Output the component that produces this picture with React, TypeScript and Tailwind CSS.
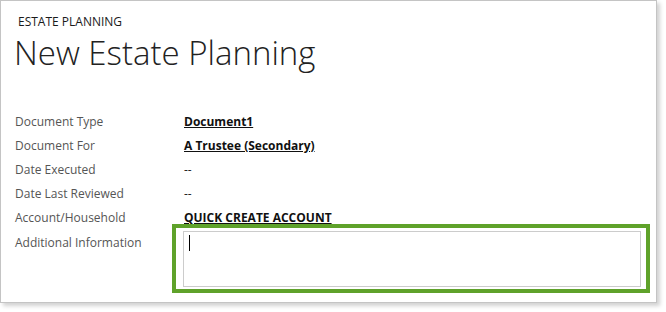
const rows: { label: string; value: string }[] = [
  { label: 'Document Type', value: 'Document1' },
  { label: 'Document For', value: 'A Trustee (Secondary)' },
  { label: 'Date Executed', value: '--' },
  { label: 'Date Last Reviewed', value: '--' },
  { label: 'Account/Household', value: 'QUICK CREATE ACCOUNT' },
]

export default function App() {
  return (
    <div className="w-[666px] h-[312px] bg-white" style={{ fontFamily: '"Open Sans", "Noto Sans", sans-serif' }}>
      <div className="w-[657px] h-[303px] bg-white border border-[#c4c4c4] shadow-[3px_3px_4px_rgba(0,0,0,0.18)] pl-[14px] pt-[13px]">
        <div className="ml-[3px] text-[12px] leading-[16px] text-[#1a1a1a]">ESTATE PLANNING</div>
        <h1 className="mt-[3px] -ml-[1px] text-[33px] leading-[40px] font-light text-[#222]">New Estate Planning</h1>

        <div className="mt-[37px]">
          {rows.map((r) => {
            const isDash = r.value === '--'
            return (
              <div key={r.label} className="flex h-[24px] items-center text-[12px] leading-[24px]">
                <div className="w-[169px] text-[#555]">{r.label}</div>
                <div className={isDash ? 'text-[#222]' : 'font-bold text-[#111] underline underline-offset-[1px]'}>{r.value}</div>
              </div>
            )
          })}
          <div className="mt-[1px] flex text-[12px] leading-[24px]">
            <div className="w-[168px] text-[#555]">Additional Information</div>
            <div className="relative">
              <div className="absolute -left-[11px] -top-[7px] -right-[9px] -bottom-[6px] border-[4px] border-[#5fa22a]" />
              <div className="relative w-[458px] h-[56px] border border-[#cccccc] bg-white">
                <div className="absolute left-[5px] top-[3px] w-[1px] h-[16px] bg-black" />
              </div>
            </div>
          </div>
        </div>
      </div>
    </div>
  )
}
